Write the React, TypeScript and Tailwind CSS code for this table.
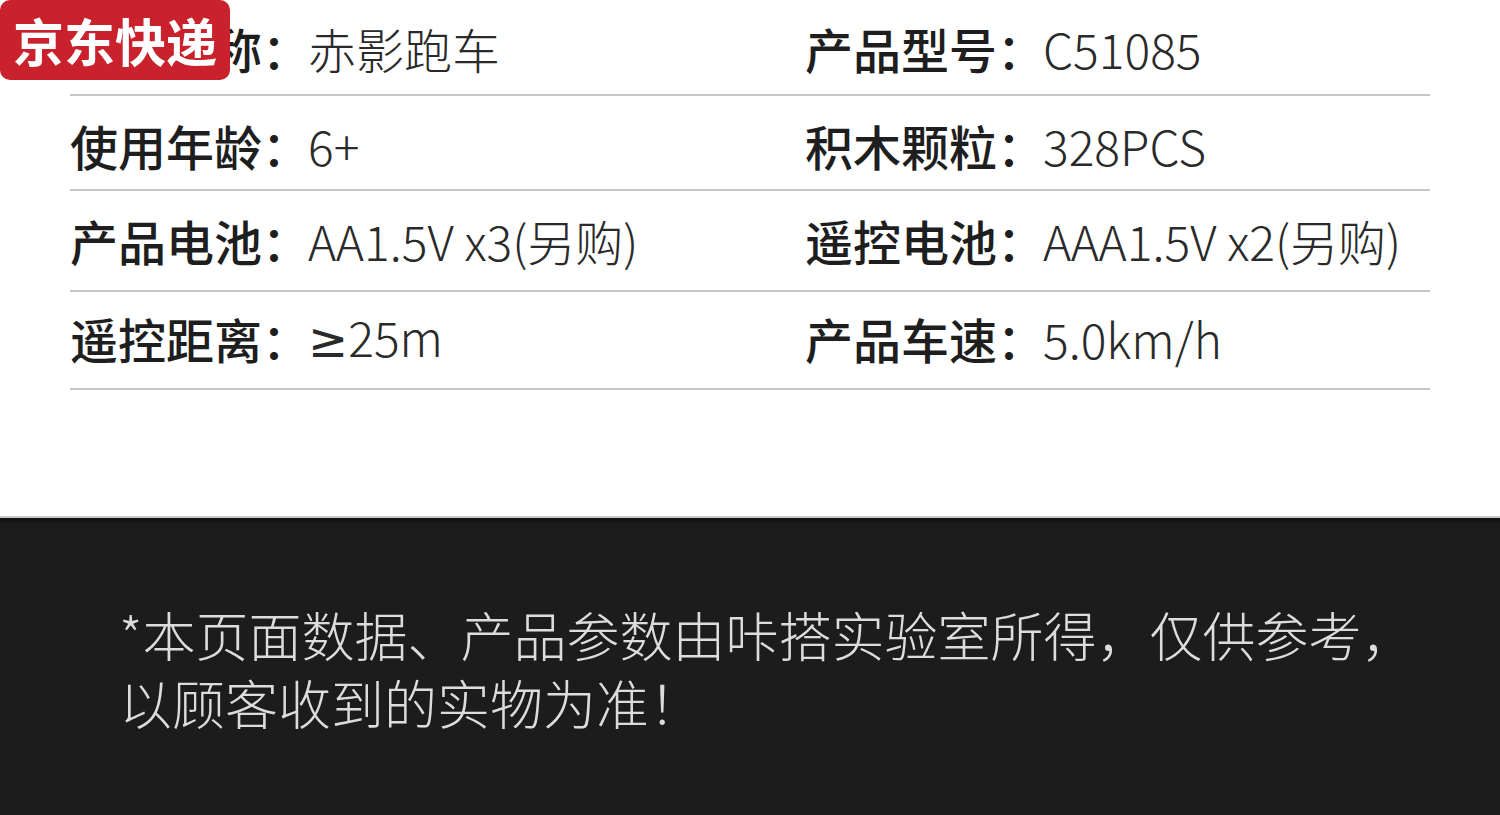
const rows = [
  { h: "h-[96px]", pad: "pt-[2px]", left: ["产品名称", "赤影跑车"], right: ["产品型号", "C51085"] },
  { h: "h-[95px]", pad: "pt-[5px]", left: ["使用年龄", "6+"], right: ["积木颗粒", "328PCS"] },
  { h: "h-[101px]", pad: "pb-[1px]", left: ["产品电池", "AA1.5V x3(另购)"], right: ["遥控电池", "AAA1.5V x2(另购)"] },
  { h: "h-[98px]", pad: "pb-[4px]", left: ["遥控距离", "≥25m"], right: ["产品车速", "5.0km/h"] },
];

const Cell = ({ label, value }: { label: string; value: string }) => (
  <div className="flex items-center">
    <span className="w-[238px] shrink-0 whitespace-nowrap font-medium text-[#1e1e1e]">{label}：</span>
    <span className="font-light text-[#2a2a2a] whitespace-nowrap">
      {value.startsWith("≥") ? (
        <>
          <span className="font-normal" style={{ fontFamily: '"DejaVu Sans", sans-serif' }}>≥</span>
          {value.slice(1)}
        </>
      ) : (
        value
      )}
    </span>
  </div>
);

export default function App() {
  return (
    <div
      className="relative w-[1500px] h-[815px] bg-white overflow-hidden"
      style={{ fontFamily: '"Noto Sans CJK SC", "Noto Sans", sans-serif' }}
    >
      <div className="absolute left-0 top-0 w-[230px] h-[80px] rounded-[10px] bg-[#c9222c] flex items-center justify-center">
        <span className="text-white font-bold text-[51px] leading-none">京东快递</span>
      </div>

      <div className="px-[70px] text-[48px] leading-none">
        {rows.map((r, i) => (
          <div key={i} className={`grid grid-cols-[735px_1fr] items-center border-b-2 border-[#c6c6c6] ${r.h} ${r.pad}`}>
            <Cell label={r.left[0]} value={r.left[1]} />
            <Cell label={r.right[0]} value={r.right[1]} />
          </div>
        ))}
      </div>

      <div className="absolute left-0 right-0 bottom-0 h-[299px] bg-[#1c1c1c] border-t-2 border-[#c8c8c8]">
        <div className="h-[6px] bg-gradient-to-b from-[#0e0e0e] to-[#1c1c1c]" />
        <div className="pl-[119px] pt-[76px] text-[53px] leading-[68px] font-light text-[#dcdcdc]">
          <p className="whitespace-nowrap">*本页面数据、产品参数由咔搭实验室所得，仅供参考，</p>
          <p className="whitespace-nowrap">以顾客收到的实物为准！</p>
        </div>
      </div>
    </div>
  );
}
